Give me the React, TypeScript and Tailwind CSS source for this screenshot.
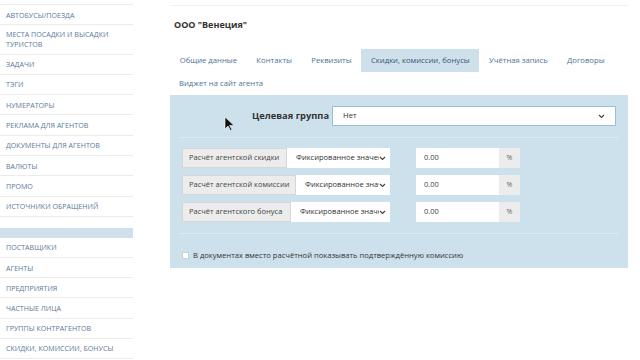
import React from 'react';

const topMenu = [
  { label: 'АВТОБУСЫ/ПОЕЗДА', h: 'h-[20px]' },
  { label: 'МЕСТА ПОСАДКИ И ВЫСАДКИ ТУРИСТОВ', h: 'h-[29.5px]' },
  { label: 'ЗАДАЧИ', h: 'h-[20.3px]' },
  { label: 'ТЭГИ', h: 'h-[20.3px]' },
  { label: 'НУМЕРАТОРЫ', h: 'h-[20.3px]' },
  { label: 'РЕКЛАМА ДЛЯ АГЕНТОВ', h: 'h-[20.3px]' },
  { label: 'ДОКУМЕНТЫ ДЛЯ АГЕНТОВ', h: 'h-[20.3px]' },
  { label: 'ВАЛЮТЫ', h: 'h-[20.3px]' },
  { label: 'ПРОМО', h: 'h-[20.3px]' },
  { label: 'ИСТОЧНИКИ ОБРАЩЕНИЙ', h: 'h-[20.3px]' },
];

const bottomMenu = ['ПОСТАВЩИКИ', 'АГЕНТЫ', 'ПРЕДПРИЯТИЯ', 'ЧАСТНЫЕ ЛИЦА', 'ГРУППЫ КОНТРАГЕНТОВ', 'СКИДКИ, КОМИССИИ, БОНУСЫ'];

const tabs = ['Общие данные', 'Контакты', 'Реквизиты', 'Скидки, комиссии, бонусы', 'Учётная запись', 'Договоры'];

const calcRows = [
  { label: 'Расчёт агентской скидки', addon: 'w-[105px]', value: 'Фиксированное значение' },
  { label: 'Расчёт агентской комиссии', addon: 'w-[114px]', value: 'Фиксированное значение' },
  { label: 'Расчёт агентского бонуса', addon: 'w-[109px]', value: 'Фиксированное значение' },
];

function Chevron() {
  return (
    <svg width="7" height="5" viewBox="0 0 7 5" className="shrink-0">
      <path d="M1 1 L3.5 3.5 L6 1" fill="none" stroke="#444" strokeWidth="1.2" />
    </svg>
  );
}

export default function App() {
  return (
    <div className="relative w-[640px] h-[360px] overflow-hidden bg-white flex font-['Open_Sans',sans-serif]">
      {/* Sidebar */}
      <aside className="w-[133px] shrink-0 pt-[4px]">
        <div className="border-t border-[#ebebeb]">
          {topMenu.map((item) => (
            <div
              key={item.label}
              className={`${item.h} flex items-center border-b border-[#ebebeb] px-[6px] text-[7.1px] leading-[10px] text-[#5b7a98]`}
            >
              {item.label}
            </div>
          ))}
        </div>
        <div className="h-[11px]"></div>
        <div className="h-[10px] bg-[#cfe0ec]"></div>
        {bottomMenu.map((label) => (
          <div
            key={label}
            className="h-[20.2px] flex items-center border-b border-[#ebebeb] px-[6px] text-[7.1px] leading-[10px] text-[#5b7a98]"
          >
            {label}
          </div>
        ))}
      </aside>

      {/* Main */}
      <main className="ml-[37px] w-[458px] pt-[5px]">
        <div className="border-t border-[#f0f0f0]"></div>
        <h1 className="mt-[12px] ml-[4px] text-[9px] font-bold text-[#333] leading-[14px]">ООО "Венеция"</h1>

        <div className="mt-[17px] flex flex-wrap">
          {tabs.map((t, i) => (
            <div
              key={t}
              className={`h-[23px] flex items-center px-[9.7px] text-[7.7px] ${
                i === 3 ? 'bg-[#cde0ec] text-[#3b5670]' : 'text-[#4f7396]'
              }`}
            >
              {t}
            </div>
          ))}
        </div>
        <div className="h-[23px] flex items-center px-[9px] text-[7.7px] text-[#4f7396]">Виджет на сайт агента</div>

        {/* Panel */}
        <div className="h-[173px] bg-[#cde1ed] px-[10px] pt-[11px]">
          <div className="flex items-center h-[20px]">
            <div className="w-[152px] text-right pr-[3px] text-[9.3px] font-bold text-[#333]">Целевая группа</div>
            <div className="w-[284px] h-[20px] bg-white border border-[#9fbfd6] flex items-center justify-between px-[10px] text-[7.7px] text-[#333]">
              <span>Нет</span>
              <Chevron />
            </div>
          </div>
          <div className="mt-[11px] border-t border-[#ddeaf3]"></div>

          <div className="mt-[10px] flex flex-col gap-[7px] pl-[2px]">
            {calcRows.map((r) => (
              <div key={r.label} className="flex items-center h-[20px]">
                <div className="flex w-[208px] h-[20px]">
                  <div className={`${r.addon} shrink-0 bg-[#ececec] border border-[#d6d6d6] flex items-center px-[6px] text-[7.5px] text-[#444] whitespace-nowrap`}>
                    {r.label}
                  </div>
                  <div className="flex-1 min-w-0 bg-white flex items-center pl-[9px] pr-[4px] text-[7.5px] text-[#333]">
                    <span className="flex-1 whitespace-nowrap overflow-hidden">{r.value}</span>
                    <Chevron />
                  </div>
                </div>
                <div className="ml-[26px] flex h-[20px]">
                  <div className="w-[83px] bg-white flex items-center px-[8px] text-[7.5px] text-[#444]">0.00</div>
                  <div className="w-[21px] bg-[#ececec] flex items-center justify-center text-[7px] text-[#666]">%</div>
                </div>
              </div>
            ))}
          </div>

          <div className="mt-[11px] border-t border-[#ddeaf3]"></div>
          <div className="mt-[16px] flex items-center pl-[2px] gap-[4px]">
            <div className="w-[7px] h-[7px] bg-white border border-[#d0d0d0]"></div>
            <span className="text-[7.6px] text-[#333]">В документах вместо расчётной показывать подтверждённую комиссию</span>
          </div>
        </div>
      </main>

      {/* Mouse cursor */}
      <svg className="absolute left-[224px] top-[116px]" width="11" height="15" viewBox="0 0 11 15">
        <path d="M1 1 L1 13 L4 10 L6.5 14.5 L8 13.8 L5.6 9.4 L10 9.4 Z" fill="#111" stroke="#fff" strokeWidth="0.6" />
      </svg>
    </div>
  );
}
